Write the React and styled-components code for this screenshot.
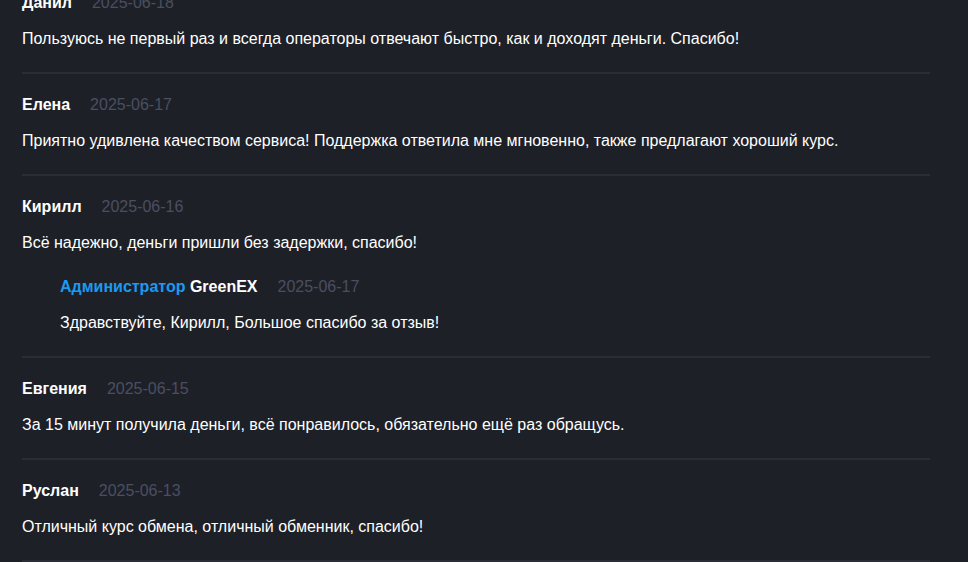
import React from "react";
import styled, { createGlobalStyle } from "styled-components";

const Global = createGlobalStyle`
  html, body { margin: 0; padding: 0; background: #1e2028; }
  body { font-family: "Liberation Sans", Arial, sans-serif; overflow: hidden; }
`;

const Page = styled.div`
  width: 968px;
  height: 562px;
  overflow: hidden;
  background: #1e2028;
`;

const List = styled.div`
  margin: -28px 0 0 22px;
  width: 908px;
`;

const Review = styled.div`
  padding: 21px 0 23px;
  border-bottom: 2px solid #2b2d36;
`;

const Header = styled.div`
  display: flex;
  align-items: center;
  gap: 20px;
  height: 20px;
  font-size: 16px;
  line-height: 20px;
`;

const Name = styled.span`
  color: #ffffff;
  font-weight: 700;
`;

const Role = styled.span`
  color: #1a9af0;
`;

const DateText = styled.span`
  color: #4a4f60;
`;

const Text = styled.p`
  margin: 16px 0 0;
  color: #ffffff;
  font-size: 16px;
  line-height: 20px;
`;

const Reply = styled.div`
  margin: 24px 0 0 38px;
`;

const reviews = [
  { name: "Данил", date: "2025-06-18", text: "Пользуюсь не первый раз и всегда операторы отвечают быстро, как и доходят деньги. Спасибо!" },
  { name: "Елена", date: "2025-06-17", text: "Приятно удивлена качеством сервиса! Поддержка ответила мне мгновенно, также предлагают хороший курс." },
  {
    name: "Кирилл",
    date: "2025-06-16",
    text: "Всё надежно, деньги пришли без задержки, спасибо!",
    reply: { date: "2025-06-17", text: "Здравствуйте, Кирилл, Большое спасибо за отзыв!" },
  },
  { name: "Евгения", date: "2025-06-15", text: "За 15 минут получила деньги, всё понравилось, обязательно ещё раз обращусь." },
  { name: "Руслан", date: "2025-06-13", text: "Отличный курс обмена, отличный обменник, спасибо!" },
];

export default function App() {
  return (
    <Page>
      <Global />
      <List>
        {reviews.map((r) => (
          <Review key={r.name}>
            <Header>
              <Name>{r.name}</Name>
              <DateText>{r.date}</DateText>
            </Header>
            <Text>{r.text}</Text>
            {r.reply && (
              <Reply>
                <Header>
                  <Name>
                    <Role>Администратор</Role> GreenEX
                  </Name>
                  <DateText>{r.reply.date}</DateText>
                </Header>
                <Text>{r.reply.text}</Text>
              </Reply>
            )}
          </Review>
        ))}
      </List>
    </Page>
  );
}
